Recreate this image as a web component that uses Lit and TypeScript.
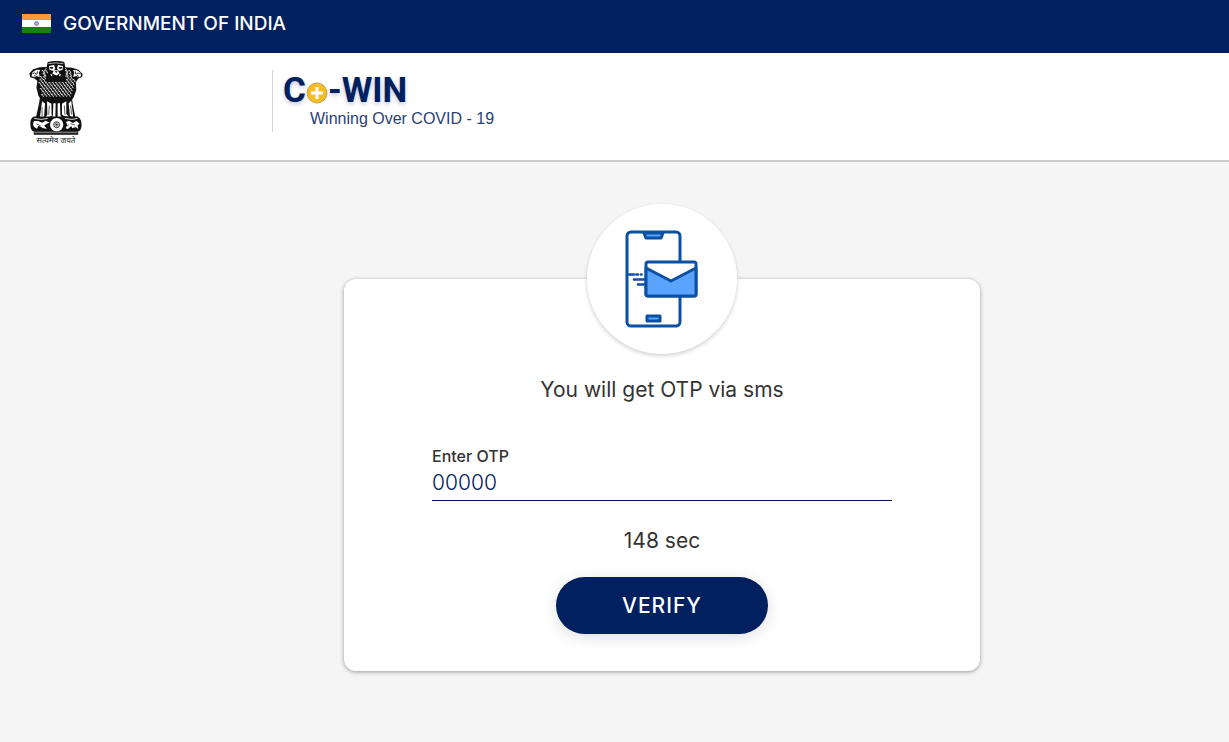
import { LitElement, html, css, svg } from "lit";
import { customElement, property, state } from "lit/decorators.js";

const curl = (x: number, y: number) => svg`<path d="M${x} ${y}q5-4 5 1t4 5"/>`;
// Staggered locks of the lions' manes
const maneLocks: Array<[number, number]> = [];
for (let row = 0; row < 9; row++) {
  const inset = row < 3 ? 12 - row * 3 : (row - 3) * 2;
  for (let x = 54 + inset + (row % 2) * 5; x < 162 - inset; x += 10) {
    if (row < 4 && x > 76 && x < 134) continue;
    maneLocks.push([x, 46 + row * 9]);
  }
}

@customElement("national-emblem")
export class NationalEmblem extends LitElement {
  static styles = css`
    :host { display: flex; flex-direction: column; align-items: center; width: 54px; }
    svg { display: block; width: 54px; height: 75px; }
    .motto { font: 8px/10px "Noto Sans Devanagari", "Noto Sans", sans-serif; color: #222; white-space: nowrap; }
  `;
  render() {
    return html`
      <svg viewBox="28 16 162 226" role="img" aria-label="State Emblem of India">
        <path fill="#111" d="M84 19q27-7 50 0l3 16 20 1 20 6 12 13-1 9-12 5-7 10 1 25-8 22-12 14-10 4H82l-14-5-12-18-6-25 3-20-9-7-13-4-2-12 11-12 20-6 21-1z"/>
        <path fill="#fff" d="M50 42l12 1-5 8 3 13-9-3-7 4-9-3 3-12zM172 44l-12-1 4 8-3 13 9-3 8 4 7-4-3-10z"/>
        <path fill="none" stroke="#111" stroke-width="2.5" d="M38 54l7-2 6 4M42 62l6-4M53 47l-1 9M182 54l-7-2-6 4M178 62l-6-4M167 47l1 9"/>
        <path fill="none" stroke="#fff" stroke-width="2" d="M86 24q23-5 45 0M80 37l-7 10 6 17M137 37l7 11-6 16"/>
        <path fill="#fff" d="M88 31l15-3 4 10-5 8-13-4zM130 31l-15-3-3 10 5 8 12-4zM103 44h11l6 10-10 6-12-6zM91 56l8 1-3 6zM125 56l-8 1 3 6z"/>
        <path fill="#111" d="M90 34h11l-2 5h-7zM117 34h11l-2 5h-7zM105 47h9l-4 5z"/>
        <g fill="none" stroke="#fff" stroke-width="2.6">${maneLocks.map(([x, y]) => curl(x, y))}</g>
        <path fill="#111" d="M61 124h96l2 19 9 46H48l10-46z"/>
        <path fill="#fff" d="M67 137l9 7-3 40-13 5 4-30zM82 137l13 8 1 37-15 5-3-3 5-6zM101 143h7l-1 44H96l4-8zM114 143h7l1 36 5 8h-13zM127 145l13-8v39l8 8-15-2-6-5zM147 144l8-8 6 50-10-4z"/>
        <path fill="none" stroke="#111" stroke-width="2" d="M67 155v27M89 150l-2 28M134 150l2 28M153 150l3 27"/>
        <path fill="#111" d="M43 183q-14 6-11 27 1 18 12 19h129q12-1 13-19 1-20-12-27z"/>
        <path fill="none" stroke="#fff" stroke-width="2.5" d="M43 189q22 6 41 0M136 189q23 6 38 0"/>
        <circle cx="111" cy="208" r="20" fill="#fff"/>
        <circle cx="111" cy="208" r="9" fill="#fff" stroke="#111" stroke-width="2.5"/>
        <path stroke="#111" stroke-width="1.5" d="M111 200v16M103 208h16M105 202l12 12M117 202l-12 12"/>
        <path fill="#fff" d="M43 197q-6 9 0 18l9 5 4-9 15 8 11 1-9-9 8-6 9-3-12-6-11 6-12-5zM139 200l9-4 12 7 10-6 10 7-6 6 2 11-8-6-10 4-3-7-10 9-7-2 5-11z"/>
        <path fill="none" stroke="#111" stroke-width="2" d="M50 205l13 7M153 205l13 4M148 208l-7 5"/>
        <path fill="#111" d="M42 229h134v9H42z"/>
        <path stroke="#fff" stroke-width="1.5" d="M44 232h130"/>
      </svg>
      <span class="motto" lang="sa">सत्यमेव जयते</span>
    `;
  }
}

@customElement("cowin-logo")
export class CowinLogo extends LitElement {
  static styles = css`
    :host { display: block; color: #00205f; }
    .name { display: flex; align-items: center; padding-top: 2px; font: 700 35px/38px Roboto, sans-serif; text-shadow: 0 2px 4px rgba(0, 32, 95, 0.25); }
    .plus { width: 22px; height: 22px; margin-top: 3px; }
    .tagline { margin: 0 0 0 27px; font: 16px/18px "Liberation Sans", Arial, sans-serif; color: #2b3e76; white-space: nowrap; }
  `;
  render() {
    return html`
      <div class="name">
        <span>C</span>
        <svg class="plus" viewBox="0 0 22 22" aria-label="o" role="img">
          <circle cx="11" cy="11" r="10" fill="#f6bd24" stroke="#bda15a"/>
          <path d="M11 5v12M5 11h12" stroke="#fff" stroke-width="3"/>
        </svg>
        <span>-WIN</span>
      </div>
      <p class="tagline">Winning Over COVID - 19</p>
    `;
  }
}

@customElement("otp-card")
export class OtpCard extends LitElement {
  @property({ type: Number }) seconds = 148;
  @state() private otp = "00000";

  static styles = css`
    :host { display: block; width: 100%; max-width: 636px; }
    .card {
      display: flex; flex-direction: column; align-items: center;
      box-sizing: border-box; padding: 0 88px 37px;
      background: #fff; border-radius: 12px;
      box-shadow: 0 1px 4px rgba(0, 0, 0, 0.38);
      color: #333;
    }
    .badge {
      display: grid; place-items: center; width: 150px; height: 150px; margin-top: -75px;
      border-radius: 50%; background: #fff; box-shadow: 0 2px 4px rgba(0, 0, 0, 0.18);
    }
    .badge svg { width: 74px; height: 98px; }
    h1 { margin: 21px 0 39px; font-size: 21px; line-height: 30px; font-weight: 400; }
    form { display: flex; flex-direction: column; align-items: center; width: 100%; }
    label { align-self: stretch; font-size: 16px; line-height: 24px; font-weight: 500; }
    input {
      box-sizing: border-box; width: 100%; height: 33px; padding: 0 0 3px; margin: 0;
      border: 0; border-bottom: 1px solid #001a4d; border-radius: 0; outline: 0;
      background: transparent; color: #00205f; font: 300 21px/28px Inter, sans-serif;
    }
    .timer { margin: 25px 0 21px; font-size: 21px; line-height: 30px; }
    button {
      width: 212px; height: 57px; border: 0; border-radius: 29px;
      background: #00205f; color: #fff; font: 500 21px/28px Inter, sans-serif; letter-spacing: 1px;
      box-shadow: 0 3px 15px rgba(0, 0, 0, 0.13); cursor: pointer;
    }
  `;

  private onInput(e: Event) {
    this.otp = (e.target as HTMLInputElement).value;
  }

  render() {
    return html`
      <section class="card">
        <div class="badge">
          <svg viewBox="0 0 74 98" fill="none" stroke="#0b50a3" stroke-width="3" stroke-linejoin="round" stroke-linecap="round" aria-hidden="true">
            <rect x="2" y="2" width="53" height="94" rx="4"/>
            <path d="M19 3l2 5h15l2-5z" fill="#5aa4ff"/>
            <rect x="22" y="86" width="13" height="5" fill="#5aa4ff"/>
            <path d="M4 44.500h5M11.500 44.500h1.500M16 44.500h.5M9 49.500h12M13 54.500h7" stroke-width="2.600"/>
            <rect x="21" y="32" width="50" height="34" rx="2" fill="#fff"/>
            <path d="M21 38l25 13 25-13v26q0 2-2 2H23q-2 0-2-2z" fill="#5aa4ff"/>
          </svg>
        </div>
        <h1>You will get OTP via sms</h1>
        <form @submit=${(e: Event) => e.preventDefault()}>
          <label for="otp">Enter OTP</label>
          <input id="otp" inputmode="numeric" autocomplete="one-time-code" .value=${this.otp} @input=${this.onInput} />
          <div class="timer">${this.seconds} sec</div>
          <button type="submit">VERIFY</button>
        </form>
      </section>
    `;
  }
}

@customElement("app-root")
export class AppRoot extends LitElement {
  static styles = css`
    :host { display: flex; flex-direction: column; min-height: 100vh; background: #f5f5f5; font-family: Inter, sans-serif; }
    .topbar { display: flex; align-items: center; gap: 12px; box-sizing: border-box; padding: 9px 22px 15px; background: #00205f; color: #fff; font-size: 19px; line-height: 29px; font-weight: 500; }
    .flag { width: 29px; height: 19px; }
    .brand { display: flex; align-items: flex-start; padding: 8px 29px; height: 91px; background: #fff; border-bottom: 2px solid #ccc; }
    .state { flex: 0 0 243px; }
    .cowin { display: flex; box-sizing: border-box; height: 62px; margin-top: 9px; padding-left: 10px; border-left: 1px solid #d4d4d4; }
    main { display: flex; justify-content: center; padding: 117px 0 70px 95px; }
  `;
  render() {
    return html`
      <div class="topbar">
        <svg class="flag" viewBox="0 0 29 19" role="img" aria-label="Flag of India">
          <path fill="#ff9a3c" d="M0 0h29v7H0z"/>
          <path fill="#fff" d="M0 6h29v7H0z"/>
          <path fill="#138310" d="M0 13h29v6H0z"/>
          <circle cx="14.5" cy="9.5" r="2" fill="#aaaade" stroke="#6868ae" stroke-width=".8"/>
        </svg>
        <span>GOVERNMENT OF INDIA</span>
      </div>
      <header class="brand">
        <div class="state"><national-emblem></national-emblem></div>
        <div class="cowin"><cowin-logo></cowin-logo></div>
      </header>
      <main><otp-card></otp-card></main>
    `;
  }
}
